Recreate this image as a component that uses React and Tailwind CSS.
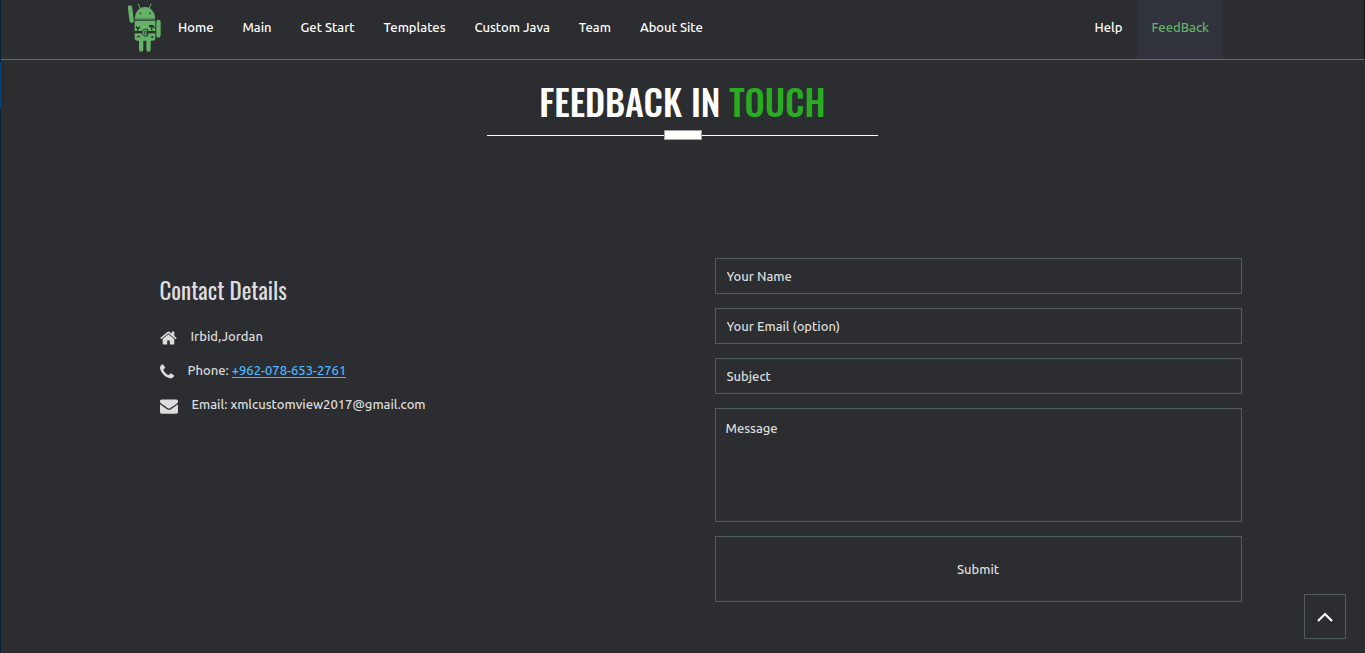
const sans = "font-['Ubuntu','Noto_Sans',sans-serif]";
const narrow = "font-['Oswald','Liberation_Sans_Narrow',sans-serif]";

function Logo() {
  return (
    <svg viewBox="36 10 105 150" className="h-[50px] w-[35px]" role="img" aria-label="Android robot">
      <g fill="#65b168" stroke="none">
        <path d="M59 57a31 35 0 0 1 62 0z" />
        <path d="M59 63h62v52q0 8-8 8H67q-8 0-8-8z" />
        <rect x="124" y="60" width="13" height="54" rx="6.5" />
        <rect x="72" y="115" width="13" height="41" rx="6" />
        <rect x="94" y="115" width="13" height="41" rx="6" />
      </g>
      <path d="M45 23l5 40" stroke="#65b168" strokeWidth="13" strokeLinecap="round" />
      <path d="M70 13l6 14M108 13l-6 14" stroke="#65b168" strokeWidth="3" strokeLinecap="round" />
      <path d="M59 60h62" stroke="#47704b" strokeWidth="4" />
      <g fill="#2c2d31">
        <circle cx="76" cy="41" r="2.5" />
        <circle cx="105" cy="41" r="2.5" />
        <rect x="58" y="94" width="64" height="7" />
        <path d="M64 79l4 4h3l4-4v5l-5 5v4h-4v-5l-4-5zM102 76h12l5 6v4h-4v-3h-3v9h-4v-9h-6z" />
        <path d="M64 114q2-6 7-6 5 0 7 6l-4-2-3-1-4 2zM109 110h6v5h-6z" />
      </g>
      <path d="M98 89H88l-7 6v8l7 6h10z" fill="#65b168" stroke="#2c2d31" strokeWidth="3" />
      <path d="M88 95h6v8h-6z" fill="#65b168" stroke="#2c2d31" strokeWidth="2" />
    </svg>
  );
}

function HomeIcon() {
  return (
    <svg viewBox="64 0 1664 1792" className="mt-[3px] h-[18px] w-[17px]" fill="currentColor" aria-hidden="true">
      <path d="M1472 992v480q0 26-19 45t-45 19h-384v-384h-256v384h-384q-26 0-45-19t-19-45v-480q0-1 .5-3t.5-3l575-474 575 474q1 2 1 6zm223-69l-62 74q-8 9-21 11h-3q-13 0-21-7l-692-577-692 577q-12 8-24 7-13-2-21-11l-62-74q-8-10-7-23.5t11-21.5l719-599q32-26 76-26t76 26l244 204v-195q0-14 9-23t23-9h192q14 0 23 9t9 23v408l219 182q10 8 11 21.5t-7 23.5z" />
    </svg>
  );
}

function PhoneIcon() {
  return (
    <svg viewBox="192 0 1408 1792" className="mt-[3px] h-[18px] w-[14px]" fill="currentColor" aria-hidden="true">
      <path d="M1600 1240q0 27-10 70.5t-21 68.5q-21 50-122 106-94 51-186 51-27 0-53-3.5t-57.5-12.5-47-14.5-55.5-20.5-49-18q-98-35-175-83-127-79-264-216t-216-264q-48-77-83-175-3-9-18-49t-20.5-55.5-14.5-47-12.5-57.5-3.5-53q0-92 51-186 56-101 106-122 25-11 68.5-21t70.5-10q14 0 21 3 18 6 53 76 11 19 30 54t35 63.5 31 53.5q3 4 17.5 25t21.5 35.5 7 28.5q0 20-28.5 50t-62 55-62 53-28.5 46q0 9 5 22.5t8.5 20.5 14 24 11.5 19q76 137 174 235t235 174q2 1 19 11.5t24 14 20.5 8.5 22.5 5q18 0 46-28.5t53-62 55-62 50-28.5q14 0 28.5 7t35.5 21.5 25 17.5q25 15 53.5 31t63.5 35 54 30q70 35 76 53 3 7 3 21z" />
    </svg>
  );
}

function MailIcon() {
  return (
    <svg viewBox="0 0 1792 1792" className="mt-[3px] h-[18px] w-[18px]" fill="currentColor" aria-hidden="true">
      <path d="M1792 710v794q0 66-47 113t-113 47h-1472q-66 0-113-47t-47-113v-794q44 49 101 87 362 246 497 345 57 42 92.5 65.5t94.5 48 110 24.5h2q51 0 110-24.5t94.5-48 92.5-65.5q170-123 498-345 57-39 100-87zm0-294q0 79-49 151t-122 123q-376 261-468 325-10 7-42.5 31t-54 38.5-52 32.5-57.5 27-50 9h-2q-23 0-50-9t-57.5-27-52-32.5-54-38.5-42.5-31q-91-64-262-182.5t-205-142.5q-62-42-117-115.5t-55-136.5q0-78 41.5-130t118.5-52h1472q65 0 112.5 47t47.5 113z" />
    </svg>
  );
}

const links = ["Home", "Main", "Get Start", "Templates", "Custom Java", "Team", "About Site"];
const field =
  "block h-9 w-full border border-[#525c5f] bg-transparent px-[11px] text-[13px] text-[#dddddd] outline-none placeholder:text-[#dddddd] placeholder:opacity-100";

export default function App() {
  return (
    <div className={`${sans} relative flex min-h-screen bg-[#2c2d31] text-[13px] leading-5 font-medium text-[#dddddd]`}>
      <div className="flex w-px shrink-0 flex-col bg-[#0b2238]" aria-hidden="true">
        <div className="mt-[62px] h-[46px] bg-[#054577]" />
      </div>

      <div className="min-w-0 grow">
        <header className="border-b border-[#6b6b6b]">
          <nav className="mx-auto flex h-[59px] max-w-[1111px] pr-[15px] text-white" aria-label="Primary">
            <a href="#home" className="mr-[2px] block pt-[3px]">
              <Logo />
            </a>
            <ul className="flex gap-px">
              {links.map((label) => (
                <li key={label}>
                  <a href="#" className="block px-[14px] pt-[17px]">
                    {label}
                  </a>
                </li>
              ))}
            </ul>
            <ul className="ml-auto flex gap-px">
              <li>
                <a href="#help" className="block px-[14px] pt-[17px]">
                  Help
                </a>
              </li>
              <li>
                <a href="#feedback" aria-current="page" className="block h-full bg-[#30333c] px-[14px] pt-[17px] text-[#65b168]">
                  FeedBack
                </a>
              </li>
            </ul>
          </nav>
        </header>

        <main>
          <div className="mx-auto w-[391px] text-center">
            <h1 className={`${narrow} pt-[17px] text-[36px] leading-[48px] font-medium text-white`}>
              FEEDBACK IN <span className="text-[#29ab22]">TOUCH</span>
            </h1>
            <div className="mt-[5px] flex items-center" aria-hidden="true">
              <span className="h-px grow bg-white" />
              <span className="h-[10px] w-[38px] border border-[#a0a0a0] bg-white" />
              <span className="h-px grow bg-white" />
            </div>
          </div>

          <div className="mx-auto mt-[118px] grid max-w-[1110px] grid-cols-2 pb-12">
            <section className="pt-4 pl-8">
              <h2 className={`${narrow} text-[23px] leading-8 font-normal`}>Contact Details</h2>
              <ul className="mt-5 flex flex-col gap-[14px]">
                <li className="flex h-5 items-center gap-[14px]">
                  <HomeIcon />
                  <span>Irbid,Jordan</span>
                </li>
                <li className="flex h-5 items-center gap-[14px]">
                  <PhoneIcon />
                  <span>
                    Phone:{" "}
                    <a href="tel:+9620786532761" className="border-b border-[#4db5ff] text-[#4db5ff]">
                      +962-078-653-2761
                    </a>
                  </span>
                </li>
                <li className="flex h-5 items-center gap-[14px]">
                  <MailIcon />
                  <span>Email: xmlcustomview2017@gmail.com</span>
                </li>
              </ul>
            </section>

            <form className="mr-[-4px] flex flex-col gap-[14px] pl-8" onSubmit={(e) => e.preventDefault()}>
              <input aria-label="Your Name" placeholder="Your Name" className={field} />
              <input type="email" aria-label="Your Email (option)" placeholder="Your Email (option)" className={field} />
              <input aria-label="Subject" placeholder="Subject" className={field} />
              <textarea
                aria-label="Message"
                placeholder="Message"
                className="block h-[114px] w-full resize-none border border-[#525c5f] bg-transparent px-[10px] py-[9px] text-[13px] leading-5 text-[#dddddd] outline-none placeholder:text-[#dddddd] placeholder:opacity-100"
              />
              <button type="submit" className="h-[66px] w-full border border-[#525c5f]">
                Submit
              </button>
            </form>
          </div>
        </main>
      </div>

      <div className="w-px shrink-0" aria-hidden="true">
        <div className="h-[58px] bg-[#151619]" />
      </div>

      <button
        type="button"
        aria-label="Back to top"
        className="fixed right-[19px] bottom-[14px] flex h-[45px] w-[42px] items-center justify-center border border-[#525c5f] text-white"
      >
        <svg viewBox="0 0 16 10" className="h-[10px] w-4" fill="none" stroke="currentColor" strokeWidth="2.2" aria-hidden="true">
          <path d="M1 9l7-7 7 7" />
        </svg>
      </button>
    </div>
  );
}
